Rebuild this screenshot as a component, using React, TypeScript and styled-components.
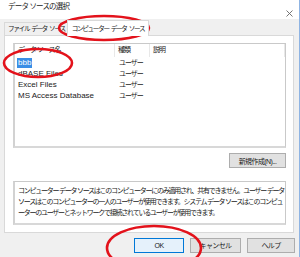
import React from "react";
import styled, { createGlobalStyle } from "styled-components";

const GlobalStyle = createGlobalStyle`
    html, body {
        margin: 0;
        padding: 0;
        background: #ffffff;
    }
`;

const JP = `"Liberation Sans", "Noto Sans CJK JP", sans-serif`;

const Window = styled.div`
    position: relative;
    width: 300px;
    height: 257px;
    box-sizing: border-box;
    background: #f0f0f0;
    border-right: 1px solid #8fb4e3;
    display: flex;
    flex-direction: column;
    font-family: ${JP};
    color: #000;
    overflow: hidden;
`;

const TitleBar = styled.div`
    height: 19px;
    background: #ffffff;
    display: flex;
    justify-content: space-between;
    padding: 0 6px 0 8px;
`;

const Title = styled.div`
    font-size: 7.5px;
    letter-spacing: -0.8px;
    line-height: 14px;
    color: #222;
`;

const Close = styled.svg`
    align-self: flex-end;
    margin-bottom: 2px;
`;

const TabRow = styled.div`
    height: 16px;
    display: flex;
    align-items: flex-end;
    padding-left: 4px;
`;

const Tab = styled.div<{ $active?: boolean }>`
    height: ${(p) => (p.$active ? 16 : 13)}px;
    box-sizing: border-box;
    padding: 0 ${(p) => (p.$active ? 4 : 3)}px;
    margin-left: ${(p) => (p.$active ? -2 : 0)}px;
    background: ${(p) => (p.$active ? "#ffffff" : "#f0f0f0")};
    border: 1px solid #d9d9d9;
    border-bottom: none;
    font-size: 6.6px;
    letter-spacing: -1.3px;
    word-spacing: 1.5px;
    line-height: ${(p) => (p.$active ? 15 : 12)}px;
    white-space: nowrap;
    color: #1a1a1a;
    position: relative;
    z-index: ${(p) => (p.$active ? 1 : 0)};
    margin-bottom: ${(p) => (p.$active ? -1 : 0)}px;
`;

const Panel = styled.div`
    margin: 0 5px 0 4px;
    height: 198px;
    box-sizing: border-box;
    background: #ffffff;
    border: 1px solid #d9d9d9;
    padding: 7px 7px 7px 8px;
    display: flex;
    flex-direction: column;
`;

const ListView = styled.div`
    height: 105px;
    box-sizing: border-box;
    border: 1px solid #c9c9c9;
    border-left-width: 2px;
    border-bottom-width: 2px;
    border-left-color: #d2d2d2;
    border-bottom-color: #d8d8d8;
    background: #fff;
`;

const Cols = "100px 35px 1fr";

const HeaderRow = styled.div`
    display: grid;
    grid-template-columns: ${Cols};
    height: 13px;
    font-size: 7px;
    letter-spacing: -1px;
    line-height: 12px;
    color: #222;
`;

const HeadCell = styled.div`
    padding-left: 3px;
    border-right: 1px solid #e8e8e8;
    white-space: nowrap;
`;

const Row = styled.div`
    display: grid;
    grid-template-columns: ${Cols};
    height: 11px;
    line-height: 11px;
`;

const NameCell = styled.div`
    padding-left: 2px;
    font-size: 8px;
    white-space: nowrap;
`;

const Name = styled.span<{ $selected?: boolean }>`
    display: inline-block;
    padding: 0 1px;
    line-height: 10px;
    background: ${(p) => (p.$selected ? "#3a8ee6" : "transparent")};
    color: ${(p) => (p.$selected ? "#ffffff" : "#1a1a1a")};
`;

const TypeCell = styled.div`
    padding-left: 4px;
    font-size: 7px;
    letter-spacing: -1px;
    white-space: nowrap;
    color: #1a1a1a;
`;

const ButtonRow = styled.div`
    display: flex;
    justify-content: flex-end;
    margin-top: 5px;
`;

const Button = styled.div<{ $default?: boolean; $w: number }>`
    width: ${(p) => p.$w}px;
    height: 15px;
    box-sizing: border-box;
    background: ${(p) => (p.$default ? "#e5f1fb" : "#e1e1e1")};
    border: 1px solid ${(p) => (p.$default ? "#0078d7" : "#adadad")};
    display: flex;
    align-items: center;
    justify-content: center;
    font-size: 7px;
    letter-spacing: -0.6px;
    white-space: nowrap;
    color: #1a1a1a;
`;

const DescBox = styled.div`
    margin-top: 13px;
    height: 44px;
    box-sizing: border-box;
    border: 1px solid #c9c9c9;
    border-left-width: 2px;
    border-bottom-width: 2px;
    border-left-color: #d2d2d2;
    border-bottom-color: #d8d8d8;
    padding: 3px 0 0 3px;
    font-size: 7px;
    letter-spacing: -1.25px;
    line-height: 11px;
    white-space: nowrap;
    color: #1a1a1a;
`;

const Footer = styled.div`
    flex: 1;
    display: flex;
    justify-content: flex-end;
    align-items: center;
    gap: 6px;
    padding: 0 4px 0 0;
`;

const Marks = styled.svg`
    position: absolute;
    left: 0;
    top: 0;
    pointer-events: none;
`;

const rows = [
    { name: "bbb", selected: true },
    { name: "dBASE Files" },
    { name: "Excel Files" },
    { name: "MS Access Database" },
];

export default function App() {
    return (
        <>
            <GlobalStyle />
            <Window>
                <TitleBar>
                    <Title>データ ソースの選択</Title>
                    <Close width="7" height="7" viewBox="0 0 7 7">
                        <path d="M0.5 0.5 L6.5 6.5 M6.5 0.5 L0.5 6.5" stroke="#666" strokeWidth="0.9" />
                    </Close>
                </TitleBar>
                <TabRow>
                    <Tab>ファイル データ ソース</Tab>
                    <Tab $active>コンピューター データ ソース</Tab>
                </TabRow>
                <Panel>
                    <ListView>
                        <HeaderRow>
                            <HeadCell>データ ソース名</HeadCell>
                            <HeadCell>種類</HeadCell>
                            <HeadCell>説明</HeadCell>
                        </HeaderRow>
                        {rows.map((r) => (
                            <Row key={r.name}>
                                <NameCell>
                                    <Name $selected={r.selected}>{r.name}</Name>
                                </NameCell>
                                <TypeCell>ユーザー</TypeCell>
                                <div />
                            </Row>
                        ))}
                    </ListView>
                    <ButtonRow>
                        <Button $w={57}>新規作成(N)...</Button>
                    </ButtonRow>
                    <DescBox>
                        コンピューター データ ソースはこのコンピューターにのみ適用され、共有できません。ユーザー データ
                        <br />
                        ソースはこのコンピューターの一人のユーザーが使用できます。システム データ ソースはこのコンピュ
                        <br />
                        ーターのユーザーとネットワークで接続されているユーザーが使用できます。
                    </DescBox>
                </Panel>
                <Footer>
                    <Button $w={50} $default>OK</Button>
                    <Button $w={51}>キャンセル</Button>
                    <Button $w={48}>ヘルプ</Button>
                </Footer>
                <Marks width="300" height="257" viewBox="0 0 300 257">
                    <g fill="none" stroke="#e3121b" strokeWidth="2.6">
                        <ellipse cx="104" cy="28" rx="45" ry="12" />
                        <ellipse cx="38" cy="63" rx="34" ry="14" />
                        <ellipse cx="154" cy="248" rx="47" ry="22" />
                    </g>
                </Marks>
            </Window>
        </>
    );
}
